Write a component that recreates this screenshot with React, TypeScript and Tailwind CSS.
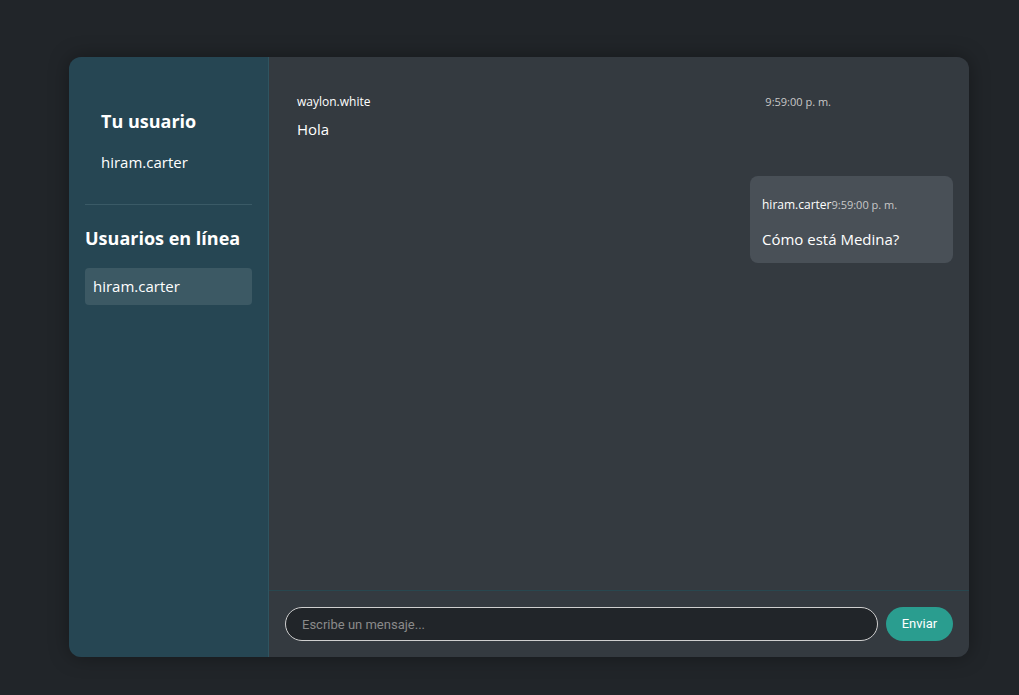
import React from "react";

const font = { fontFamily: '"Open Sans", "Noto Sans", sans-serif' };
const inputFont = { fontFamily: 'Roboto, "Liberation Sans", sans-serif' };

export default function App() {
  return (
    <div className="min-h-[695px] w-full bg-[#212529] pl-[69px] pt-[57px] text-white" style={font}>
      <div className="w-[900px] h-[600px] rounded-xl overflow-hidden flex shadow-[0_0_20px_rgba(0,0,0,0.35)]">
        {/* Sidebar */}
        <aside className="w-[200px] shrink-0 bg-[#264653] border-r border-[#2f5460] p-4">
          <div className="p-4 pt-[35px]">
            <h2 className="text-[18px] font-bold leading-[27px]">Tu usuario</h2>
            <p className="mt-[16px] text-[15px] leading-[22px]">hiram.carter</p>
          </div>
          <hr className="mt-[15px] border-0 border-t border-[#3a5a66]" />
          <h2 className="mt-[20px] text-[18px] font-bold leading-[27px]">Usuarios en línea</h2>
          <ul className="mt-[16px]">
            <li className="h-[37px] rounded bg-[#3c5964] px-2 flex items-center text-[15px]">
              hiram.carter
            </li>
          </ul>
        </aside>

        {/* Chat */}
        <section className="flex-1 bg-[#343a40] flex flex-col">
          <div className="flex-1 p-4 flex flex-col">
            <div className="w-[558px] px-3 pt-5 pb-3 self-start">
              <div className="flex justify-between items-center h-[18px]">
                <span className="text-[12px]">waylon.white</span>
                <span className="text-[11px] text-[#c8c8c8]">9:59:00 p. m.</span>
              </div>
              <p className="mt-[6px] text-[15px] leading-[24px]">Hola</p>
            </div>
            <div className="mt-[23px] self-end w-[203px] bg-[#495057] rounded-lg px-3 pt-5 pb-3">
              <div className="flex items-center h-[18px]">
                <span className="text-[12px]">hiram.carter</span>
                <span className="text-[11px] text-[#c8c8c8]">9:59:00 p. m.</span>
              </div>
              <p className="mt-[13px] text-[15px] leading-[24px]">Cómo está Medina?</p>
            </div>
          </div>
          <div className="border-t border-[#28474f] px-4 pt-4 pb-4 flex gap-2">
            <input
              className="flex-1 h-[34px] rounded-full bg-[#212529] border border-[#cfcfcf] px-4 text-[13px] text-white placeholder:text-[#8a8a8a] outline-none"
              style={inputFont}
              placeholder="Escribe un mensaje..."
            />
            <button
              className="w-[67px] h-[34px] rounded-full bg-[#2a9d8f] text-[13px] text-white"
              style={inputFont}
            >
              Enviar
            </button>
          </div>
        </section>
      </div>
    </div>
  );
}
